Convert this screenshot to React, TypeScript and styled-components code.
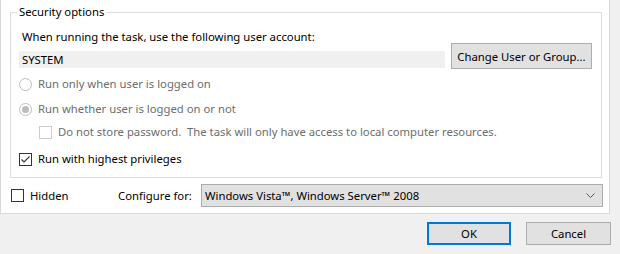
import React from "react";
import styled, { createGlobalStyle } from "styled-components";

const Global = createGlobalStyle`
  html, body { margin: 0; padding: 0; background: #f0f0f0; }
  body { font-family: "Segoe UI", "Noto Sans", sans-serif; font-size: 11.3px; color: #000; }
  * { box-sizing: border-box; }
`;

const Page = styled.div`
  width: 620px;
  height: 254px;
  background: #f0f0f0;
  overflow: hidden;
`;

const Panel = styled.div`
  width: 610px;
  height: 214px;
  background: #fff;
  border: 1px solid #d9d9d9;
  border-top: none;
  padding: 12px 0 0 9px;
`;

const GroupBox = styled.div`
  position: relative;
  width: 592px;
  height: 166px;
  border: 1px solid #dcdcdc;
  padding: 16px 8px 0 8px;
  display: flex;
  flex-direction: column;
`;

const Legend = styled.span`
  position: absolute;
  left: 6px;
  top: -9px;
  padding: 0 2px;
  background: #fff;
  line-height: 16px;
`;

const Label = styled.div`
  line-height: 16px;
  padding-left: 3px;
`;

const AccountRow = styled.div`
  display: flex;
  align-items: flex-start;
  gap: 6px;
  margin-top: -2px;
`;

const Field = styled.div`
  width: 426px;
  height: 17px;
  margin-top: 8px;
  background: #f0f0f0;
  line-height: 17px;
  padding-left: 3px;
`;

const Button = styled.button<{ $default?: boolean; $w: number; $h: number }>`
  width: ${(p) => p.$w}px;
  height: ${(p) => p.$h}px;
  background: #e1e1e1;
  border: ${(p) => (p.$default ? "2px solid #0078d7" : "1px solid #adadad")};
  font: inherit;
  color: #000;
  padding: 0;
  display: flex;
  align-items: center;
  justify-content: center;
`;

const OptionRow = styled.div<{ $indent?: number; $mt: number }>`
  display: flex;
  align-items: center;
  gap: 6px;
  height: 16px;
  margin-top: ${(p) => p.$mt}px;
  padding-left: ${(p) => p.$indent ?? 0}px;
`;

const OptionText = styled.span<{ $disabled?: boolean }>`
  color: ${(p) => (p.$disabled ? "#6d6d6d" : "#000")};
  line-height: 16px;
  white-space: nowrap;
`;

const Radio = styled.span<{ $checked?: boolean }>`
  width: 13px;
  height: 13px;
  border-radius: 50%;
  border: 1px solid #bcbcbc;
  background: #fff;
  display: flex;
  align-items: center;
  justify-content: center;
  flex: none;
  &::after {
    content: "";
    display: ${(p) => (p.$checked ? "block" : "none")};
    width: 7px;
    height: 7px;
    border-radius: 50%;
    background: #bcbcbc;
  }
`;

const Box = styled.span<{ $disabled?: boolean }>`
  width: 13px;
  height: 13px;
  border: 1px solid ${(p) => (p.$disabled ? "#cccccc" : "#333")};
  background: #fff;
  flex: none;
  display: flex;
  align-items: center;
  justify-content: center;
`;

const BottomRow = styled.div`
  display: flex;
  align-items: center;
  height: 23px;
  margin-top: 6px;
  padding-left: 1px;
`;

const HiddenText = styled.span`
  margin-left: 6px;
  width: 88px;
`;

const ConfigLabel = styled.span`
  width: 83px;
`;

const Combo = styled.div`
  width: 402px;
  height: 23px;
  border: 1px solid #adadad;
  background: #e1e1e1;
  display: flex;
  align-items: center;
  justify-content: space-between;
  padding: 0 7px 0 3px;
`;

const Footer = styled.div`
  display: flex;
  justify-content: flex-end;
  gap: 15px;
  padding: 8px 9px 0 0;
`;

const Check = () => (
  <svg width="11" height="11" viewBox="0 0 11 11">
    <path d="M1.5 5.5 L4 8 L9.5 2.5" fill="none" stroke="#333" strokeWidth="1.1" />
  </svg>
);

const Chevron = () => (
  <svg width="9" height="6" viewBox="0 0 9 6">
    <path d="M0.5 0.5 L4.5 4.5 L8.5 0.5" fill="none" stroke="#555" strokeWidth="1" />
  </svg>
);

export default function App() {
  return (
    <Page>
      <Global />
      <Panel>
        <GroupBox>
          <Legend>Security options</Legend>
          <Label>When running the task, use the following user account:</Label>
          <AccountRow>
            <Field>SYSTEM</Field>
            <Button $w={141} $h={26}>Change User or Group...</Button>
          </AccountRow>
          <OptionRow $mt={7}>
            <Radio />
            <OptionText $disabled>Run only when user is logged on</OptionText>
          </OptionRow>
          <OptionRow $mt={9}>
            <Radio $checked />
            <OptionText $disabled>Run whether user is logged on or not</OptionText>
          </OptionRow>
          <OptionRow $mt={7} $indent={20}>
            <Box $disabled />
            <OptionText $disabled>Do not store password.&nbsp; The task will only have access to local computer resources.</OptionText>
          </OptionRow>
          <OptionRow $mt={11}>
            <Box>
              <Check />
            </Box>
            <OptionText>Run with highest privileges</OptionText>
          </OptionRow>
        </GroupBox>
        <BottomRow>
          <Box />
          <HiddenText>Hidden</HiddenText>
          <ConfigLabel>Configure for:</ConfigLabel>
          <Combo>
            <span>Windows Vista™, Windows Server™ 2008</span>
            <Chevron />
          </Combo>
        </BottomRow>
      </Panel>
      <Footer>
        <Button $default $w={84} $h={23}>OK</Button>
        <Button $w={85} $h={23}>Cancel</Button>
      </Footer>
    </Page>
  );
}
